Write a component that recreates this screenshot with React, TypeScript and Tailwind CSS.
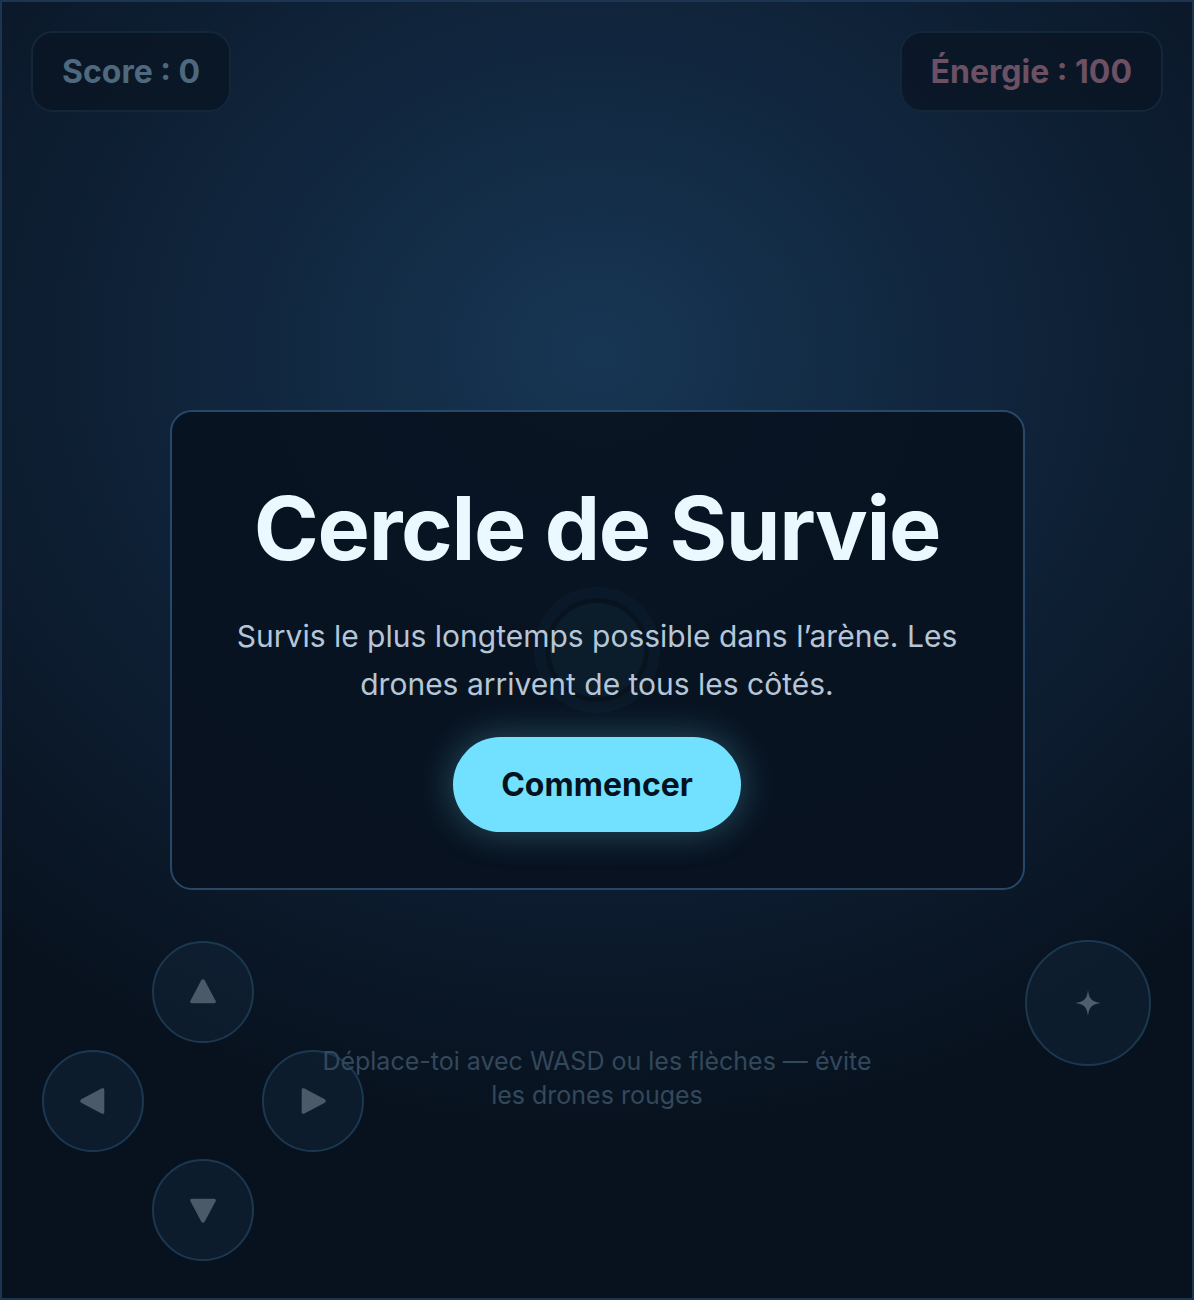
import React from "react";

const font = { fontFamily: "Inter, 'Noto Sans', sans-serif" };

const Triangle = ({ dir }: { dir: "up" | "down" | "left" | "right" }) => {
  const rot = { up: 0, right: 90, down: 180, left: 270 }[dir];
  return (
    <svg width="32" height="32" viewBox="0 0 32 32" style={{ transform: `rotate(${rot}deg)` }}>
      <path
        d="M14.3 4.2a2 2 0 0 1 3.4 0l11 20.8A1.6 1.6 0 0 1 27.3 27.3H4.7A1.6 1.6 0 0 1 3.3 25z"
        fill="#4a5a69"
      />
    </svg>
  );
};

const PadButton = ({ dir, className }: { dir: "up" | "down" | "left" | "right"; className: string }) => (
  <button
    className={`w-[102px] h-[102px] rounded-full border-2 border-[#1b3850] bg-[#11263a]/50 flex items-center justify-center ${className}`}
  >
    <Triangle dir={dir} />
  </button>
);

export default function App() {
  return (
    <div
      style={font}
      className="relative w-[1194px] h-[1300px] overflow-hidden border-2 border-[#1c3552] bg-[radial-gradient(ellipse_75%_60%_at_50%_27%,#173654_0%,#10243b_45%,#08121f_100%)]"
    >
      {/* HUD */}
      <div className="absolute top-[29px] left-[29px] right-[29px] flex justify-between">
        <div className="h-[81px] px-[29px] rounded-[22px] border-2 border-[#14263a] bg-[#0a1524]/80 flex items-center text-[32px] font-bold text-[#4e697d]">
          Score : 0
        </div>
        <div className="h-[81px] px-[29px] rounded-[22px] border-2 border-[#14263a] bg-[#0a1524]/80 flex items-center text-[32px] font-bold text-[#6c5064]">
          Énergie : 100
        </div>
      </div>

      {/* Player */}
      <div className="absolute inset-0 flex items-center justify-center">
        <div className="w-[126px] h-[126px] rounded-full bg-[#3aa0d0]/45 flex items-center justify-center">
          <div className="w-[104px] h-[104px] rounded-full bg-[#0c2030] flex items-center justify-center">
            <div className="w-[94px] h-[94px] rounded-full bg-[#4ab8d8]/60" />
          </div>
        </div>
      </div>

      {/* Controls */}
      <div className="absolute left-[40px] bottom-[37px] grid grid-cols-[102px_102px_102px] grid-rows-[102px_102px_102px] gap-x-2 gap-y-[7px]">
        <PadButton dir="up" className="col-start-2 row-start-1" />
        <PadButton dir="left" className="col-start-1 row-start-2" />
        <PadButton dir="right" className="col-start-3 row-start-2" />
        <PadButton dir="down" className="col-start-2 row-start-3" />
      </div>

      <button className="absolute right-[41px] top-[938px] w-[126px] h-[126px] rounded-full border-2 border-[#1b3850] bg-[#11263a]/50 flex items-center justify-center">
        <svg width="30" height="30" viewBox="0 0 30 30">
          <path d="M15 2 C16 11 19 14 28 15 C19 16 16 19 15 28 C14 19 11 16 2 15 C11 14 14 11 15 2Z" fill="#4d5e6d" />
        </svg>
      </button>

      <p className="absolute left-0 right-0 top-[1042px] mx-auto w-[570px] text-center text-[25px] leading-[34px] text-[#33485b]">
        Déplace-toi avec WASD ou les flèches — évite les drones rouges
      </p>

      {/* Modal */}
      <div className="absolute inset-0 flex items-center justify-center">
        <div className="w-[855px] h-[480px] rounded-[22px] border-2 border-[#28486a] bg-[#08121f]/[0.9] flex flex-col items-center pt-[66px]">
          <h1 className="text-[88px] leading-[100px] font-bold tracking-[-0.015em] text-[#eaf8ff]">
            Cercle de Survie
          </h1>
          <p className="mt-[34px] max-w-[780px] text-center text-[30px] leading-[48px] text-[#b6c6d6]">
            Survis le plus longtemps possible dans l’arène. Les drones arrivent de tous les côtés.
          </p>
          <button className="mt-[29px] w-[288px] h-[95px] rounded-full bg-[#72e1ff] text-[32px] font-bold text-[#04121e] shadow-[0_0_36px_rgba(114,225,255,0.3)]">
            Commencer
          </button>
        </div>
      </div>
    </div>
  );
}
